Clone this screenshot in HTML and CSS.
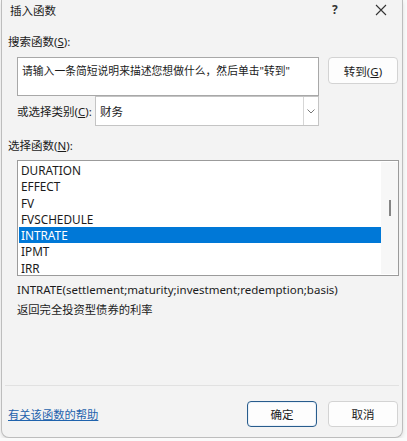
FILE: index.html
```html
<!DOCTYPE html>
<html lang="zh-CN">
  <head>
    <meta charset="UTF-8" />
    <meta name="viewport" content="width=device-width, initial-scale=1.0" />
    <title>插入函数</title>
    <link rel="stylesheet" href="styles.css">
  </head>
  <body>
    <!-- Cuadro de diálogo -->
    <div class="dialog">
      <div class="titlebar">
        <span class="title">插入函数</span>
        <span class="help">?</span>
        <span class="close">
          <svg width="12" height="12" viewBox="0 0 12 12">
            <path d="M1 1 L11 11 M11 1 L1 11" stroke="#333" stroke-width="1.1" fill="none" />
          </svg>
        </span>
      </div>

      <div class="label">搜索函数(<u>S</u>):</div>
      <div class="search-row">
        <div class="search-box">请输入一条简短说明来描述您想做什么，然后单击"转到"</div>
        <button class="btn">转到(<u>G</u>)</button>
      </div>

      <div class="category-row">
        <span class="cat-label">或选择类别(<u>C</u>):</span>
        <div class="select">
          <span class="select-value">财务</span>
          <span class="select-arrow">
            <svg width="8" height="5" viewBox="0 0 8 5">
              <path d="M0.5 0.5 L4 4 L7.5 0.5" stroke="#777" stroke-width="1" fill="none" />
            </svg>
          </span>
        </div>
      </div>

      <div class="label label-list">选择函数(<u>N</u>):</div>
      <div class="listbox">
        <div class="items">
          <div class="item">DURATION</div>
          <div class="item">EFFECT</div>
          <div class="item">FV</div>
          <div class="item">FVSCHEDULE</div>
          <div class="item selected">INTRATE</div>
          <div class="item">IPMT</div>
          <div class="item">IRR</div>
        </div>
        <div class="scrollbar"><div class="thumb"></div></div>
      </div>

      <div class="signature">INTRATE(settlement;maturity;investment;redemption;basis)</div>
      <div class="description">返回完全投资型债券的利率</div>

      <div class="spacer"></div>
      <div class="separator"></div>

      <div class="footer">
        <a href="#" class="help-link">有关该函数的帮助</a>
        <div class="buttons">
          <button class="btn btn-default">确定</button>
          <button class="btn">取消</button>
        </div>
      </div>
    </div>
  </body>
</html>
```

FILE: styles.css
```css
/* Fondo (hoja de cálculo detrás) */
body {
  margin: 0;
  background: #fafafa;
  font-family: 'Noto Sans', 'Noto Sans CJK SC', sans-serif;
  font-size: 12px;
  color: #1b1b1b;
}

.dialog {
  box-sizing: border-box;
  width: 402px;
  height: 438px;
  margin-left: 1px;
  background: #f3f3f3;
  border: 1px solid #bdbdbd;
  border-top: none;
  border-radius: 0 0 8px 8px;
  display: flex;
  flex-direction: column;
  box-shadow: 0 2px 4px rgba(0, 0, 0, 0.12);
}

/* Barra de título */
.titlebar {
  height: 19px;
  display: flex;
  align-items: center;
  padding-left: 8px;
}

.title {
  flex: 1;
  font-size: 11.5px;
}

.help {
  width: 12px;
  margin-right: 31px;
  font-size: 12px;
  font-weight: bold;
  color: #333;
}

.close {
  display: flex;
  margin-right: 15px;
}

/* Etiquetas */
.label {
  margin-top: 14px;
  padding-left: 6px;
  height: 17px;
  line-height: 17px;
  font-size: 11.5px;
}

.label-list {
  margin-top: 11px;
}

/* Búsqueda */
.search-row {
  display: flex;
  margin-top: 7px;
  padding-left: 15px;
}

.search-box {
  box-sizing: border-box;
  width: 302px;
  height: 39px;
  background: #fff;
  border: 1px solid #a8a8a8;
  padding: 4px 4px;
  font-size: 10.8px;
  line-height: 17px;
  white-space: nowrap;
  overflow: hidden;
}

.btn {
  box-sizing: border-box;
  width: 70px;
  height: 27px;
  margin-left: 9px;
  background: #fdfdfd;
  border: 1px solid #d3d3d3;
  border-radius: 4px;
  font-family: 'Noto Sans', 'Noto Sans CJK SC', sans-serif;
  font-size: 11.5px;
  color: #1b1b1b;
  padding: 0;
}

.btn-default {
  border: 1px solid #285c8c;
  box-shadow: inset 0 0 0 1px #e9f1f9;
}

/* Categoría */
.category-row {
  display: flex;
  align-items: center;
  padding-left: 15px;
  height: 30px;
}

.cat-label {
  width: 78px;
  font-size: 11.5px;
}

.select {
  box-sizing: border-box;
  width: 224px;
  height: 30px;
  background: #fff;
  border: 1px solid #c4c4c4;
  display: flex;
  align-items: center;
}

.select-value {
  flex: 1;
  padding-left: 4px;
  font-size: 11.5px;
}

.select-arrow {
  box-sizing: border-box;
  width: 15px;
  height: 28px;
  border-left: 1px solid #d6d6d6;
  display: flex;
  align-items: center;
  justify-content: center;
}

/* Lista de funciones */
.listbox {
  box-sizing: border-box;
  width: 382px;
  height: 116px;
  margin-top: 6px;
  margin-left: 15px;
  background: #fff;
  border: 1px solid #9b9b9b;
  display: flex;
  padding: 1px 0 1px 1px;
}

.items {
  flex: 1;
}

.item {
  height: 16.3px;
  line-height: 16.3px;
  padding-left: 2px;
  font-size: 11.8px;
}

.selected {
  background: #0078d7;
  color: #fff;
}

.scrollbar {
  width: 17px;
  background: #f7f7f7;
  position: relative;
}

.thumb {
  position: absolute;
  left: 8px;
  top: 38px;
  width: 2px;
  height: 16px;
  background: #858585;
}

/* Descripción */
.signature {
  margin-top: 5px;
  padding-left: 15px;
  font-size: 11.5px;
  line-height: 17px;
}

.description {
  margin-top: 3px;
  padding-left: 15px;
  font-size: 11.3px;
  line-height: 17px;
}

.spacer {
  flex: 1;
}

.separator {
  height: 1px;
  margin: 0 3px;
  background: #e1e1e1;
}

/* Pie */
.footer {
  display: flex;
  align-items: center;
  justify-content: space-between;
  height: 26px;
  margin-top: 15px;
  margin-bottom: 10px;
  padding-left: 6px;
  padding-right: 4px;
}

.help-link {
  color: #1f63ad;
  font-size: 11.3px;
  text-decoration: underline;
}

.buttons {
  display: flex;
}

.buttons .btn {
  height: 26px;
  margin-left: 11px;
}
```
